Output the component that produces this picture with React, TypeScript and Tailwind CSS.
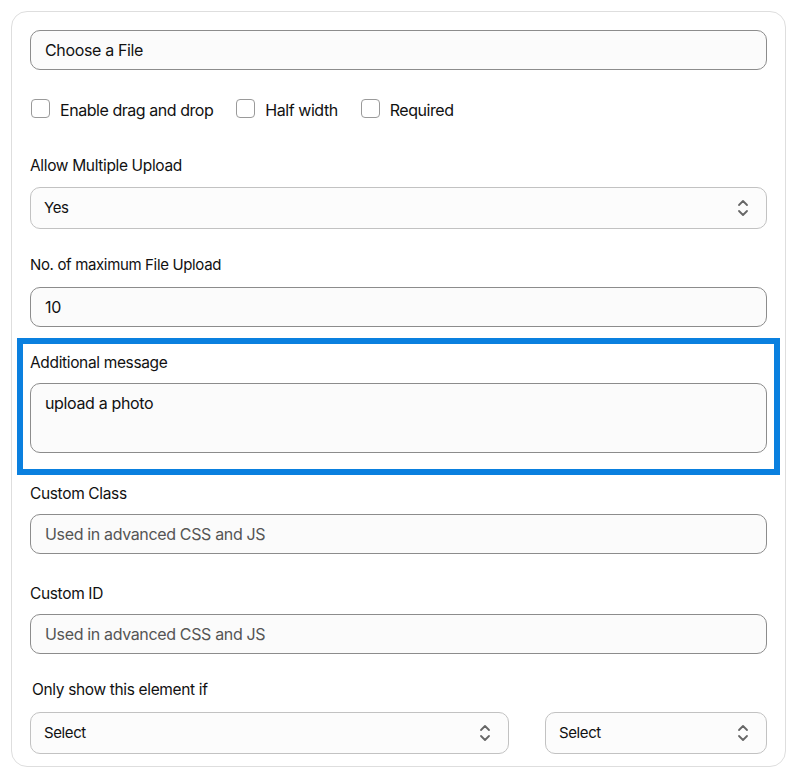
import React from "react";

const font = { fontFamily: "Inter, 'Noto Sans', 'Liberation Sans', sans-serif" };

function Chevrons() {
  return (
    <svg width="14" height="22" viewBox="0 0 14 22" fill="none" stroke="#666666" strokeWidth="1.8" strokeLinecap="round" strokeLinejoin="round">
      <path d="M3 8 L7 4 L11 8" />
      <path d="M3 14 L7 18 L11 14" />
    </svg>
  );
}

function Checkbox({ label }: { label: string }) {
  return (
    <label className="flex items-center gap-[10px]">
      <span className="block w-[19px] h-[19px] rounded-[4px] border border-[#9a9a9a] bg-white" />
      <span className="relative top-[2px] text-[16px] leading-[20px] text-[#111111] tracking-[-0.45px]">{label}</span>
    </label>
  );
}

function Label({ children, className = "" }: { children: React.ReactNode; className?: string }) {
  return <div className={`text-[15.5px] leading-[20px] text-[#111111] tracking-[-0.35px] ${className}`}>{children}</div>;
}

function TextInput({ value, placeholder }: { value?: string; placeholder?: string }) {
  return (
    <div className="h-[40px] rounded-[10px] border border-[#8c8c8c] bg-[#fbfbfb] flex items-center px-[14px]">
      {value ? (
        <span className="text-[16px] text-[#111111] tracking-[-0.35px]">{value}</span>
      ) : (
        <span className="text-[16px] text-[#555555] tracking-[-0.35px]">{placeholder}</span>
      )}
    </div>
  );
}

function Select({ value, className = "" }: { value: string; className?: string }) {
  return (
    <div className={`h-[42px] rounded-[10px] border border-[#c2c2c2] bg-[#fcfcfc] flex items-center justify-between pl-[13px] pr-[16px] ${className}`}>
      <span className="text-[15px] text-[#111111] tracking-[-0.4px]">{value}</span>
      <Chevrons />
    </div>
  );
}

export default function App() {
  return (
    <div className="min-h-[768px] bg-white overflow-hidden" style={font}>
      <div className="ml-[11px] mt-[11px] w-[775px] rounded-[16px] border border-[#dedede] bg-white px-[18px] pt-[18px] pb-[12px]">
        <TextInput value="Choose a File" />

        <div className="mt-[28px] flex items-center gap-[23px] pl-[1px]">
          <Checkbox label="Enable drag and drop" />
          <Checkbox label="Half width" />
          <Checkbox label="Required" />
        </div>

        <Label className="mt-[38px]">Allow Multiple Upload</Label>
        <Select value="Yes" className="mt-[11px]" />

        <Label className="mt-[26px] text-[15px]">No. of maximum File Upload</Label>
        <div className="mt-[12px]">
          <TextInput value="10" />
        </div>

        <div className="mt-[11px] -mx-[13px] border-[6px] border-[#0a80df] px-[7px] pt-[9px] pb-[16px]">
          <Label>Additional message</Label>
          <div className="mt-[10px] h-[70px] rounded-[10px] border border-[#8c8c8c] bg-[#fbfbfb] px-[14px] pt-[7px]">
            <span className="text-[16px] text-[#111111] tracking-[-0.35px]">upload a photo</span>
          </div>
        </div>

        <Label className="mt-[9px]">Custom Class</Label>
        <div className="mt-[10px]">
          <TextInput placeholder="Used in advanced CSS and JS" />
        </div>

        <Label className="mt-[30px]">Custom ID</Label>
        <div className="mt-[10px]">
          <TextInput placeholder="Used in advanced CSS and JS" />
        </div>

        <Label className="mt-[26px] pl-[2px]">Only show this element if</Label>
        <div className="mt-[12px] flex gap-[36px]">
          <Select value="Select" className="w-[479px]" />
          <Select value="Select" className="flex-1" />
        </div>
      </div>
    </div>
  );
}
